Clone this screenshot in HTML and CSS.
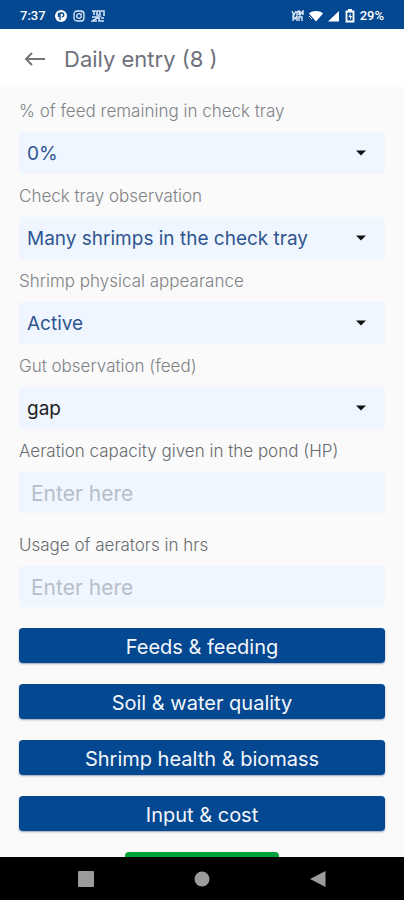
FILE: index.html
```html
<!DOCTYPE html>
<html lang="en">
<head>
<meta charset="utf-8">
<meta name="viewport" content="width=device-width, initial-scale=1">
<title>Daily entry</title>
<link rel="stylesheet" href="styles.css">
</head>
<body>
<div class="status">
  <div class="status-group">
    <span class="time">7:37</span>
    <svg width="12" height="12" viewBox="0 0 12 12" aria-hidden="true"><circle cx="6" cy="6" r="6" fill="#fff"/><path d="M5 10V3h1.800a1.800 1.800 0 0 1 0 3.800M3.500 3v4" fill="none" stroke="#034890" stroke-width="1.400"/></svg>
    <svg width="12" height="12" viewBox="0 0 12 12" fill="none" stroke="#dfe9f5" stroke-width="1.300" aria-hidden="true"><rect x="1" y="1" width="10" height="10" rx="3"/><circle cx="6" cy="6" r="2.300"/><path d="M8.500 3h.8"/></svg>
    <svg width="14" height="12" viewBox="0 0 14 12" fill="none" stroke="#d3e2f3" stroke-width="1.600" aria-hidden="true"><path d="M1 1h4M3 1v4M6 1v4h3V1zM10 1h3v5M1 7h7l-7 4h5M8 7v4h5M10 8h3"/></svg>
  </div>
  <div class="status-group status-right">
    <svg width="13" height="12" viewBox="0 0 13 12" fill="none" stroke="#dce8f5" stroke-width="1.400" aria-hidden="true"><path d="M1 1l2 4 2-4M6 5V2l2-1v4M9 1v4l3-4v4M2 11V6l2 3 2-3v5M8 6v5M8 7h3v4"/></svg>
    <svg width="14" height="12" viewBox="0 0 14 12" aria-hidden="true"><path d="M0 3.500C4 .3 10 .3 14 3.500L7 11.500z" fill="#fff"/><path d="M0 6l3 3" stroke="#fff"/></svg>
    <svg width="12" height="12" viewBox="0 0 12 12" aria-hidden="true"><path d="M0 11.500L11 1v10.500z" fill="#fff"/></svg>
    <svg width="10" height="14" viewBox="0 0 10 14" aria-hidden="true"><path d="M3 1h4M1.500 2.500h7v10h-7z" fill="none" stroke="#fff" stroke-width="1.800"/><path d="M5.500 4L3.500 8H5v3l2-4H5.500z" fill="#fff"/></svg>
    <span class="battery">29%</span>
  </div>
</div>
<header class="header">
  <button class="back" type="button" aria-label="Back">
    <svg width="22" height="16" viewBox="0 0 22 16" fill="none" stroke="#747474" stroke-width="2" aria-hidden="true"><path d="M21 8H2M8 2L2 8l6 6"/></svg>
  </button>
  <h1 class="title">Daily entry (8 )</h1>
</header>
<main class="content">
  <form class="form">
    <div class="field">
      <label class="label" for="remaining">% of feed remaining in check tray</label>
      <div class="picker">
        <select class="control" id="remaining"><option>0%</option></select>
        <svg class="arrow" width="10" height="6" viewBox="0 0 10 6" aria-hidden="true"><path d="M0 .5h10L5 5.500z"/></svg>
      </div>
    </div>
    <div class="field">
      <label class="label" for="tray">Check tray observation</label>
      <div class="picker">
        <select class="control" id="tray"><option>Many shrimps in the check tray</option></select>
        <svg class="arrow" width="10" height="6" viewBox="0 0 10 6" aria-hidden="true"><path d="M0 .5h10L5 5.500z"/></svg>
      </div>
    </div>
    <div class="field">
      <label class="label" for="appearance">Shrimp physical appearance</label>
      <div class="picker">
        <select class="control" id="appearance"><option>Active</option></select>
        <svg class="arrow" width="10" height="6" viewBox="0 0 10 6" aria-hidden="true"><path d="M0 .5h10L5 5.500z"/></svg>
      </div>
    </div>
    <div class="field">
      <label class="label" for="gut">Gut observation (feed)</label>
      <div class="picker">
        <select class="control control-dark" id="gut"><option>gap</option></select>
        <svg class="arrow" width="10" height="6" viewBox="0 0 10 6" aria-hidden="true"><path d="M0 .5h10L5 5.500z"/></svg>
      </div>
    </div>
    <div class="field field-entry">
      <label class="label label-dark" for="capacity">Aeration capacity given in the pond (HP)</label>
      <input class="control control-entry" id="capacity" type="text" placeholder="Enter here">
    </div>
    <div class="field field-entry">
      <label class="label label-dark" for="usage">Usage of aerators in hrs</label>
      <input class="control control-entry" id="usage" type="text" placeholder="Enter here">
    </div>
    <div class="actions">
      <button class="action" type="button">Feeds &amp; feeding</button>
      <button class="action" type="button">Soil &amp; water quality</button>
      <button class="action" type="button">Shrimp health &amp; biomass</button>
      <button class="action" type="button">Input &amp; cost</button>
      <button class="save" type="submit" aria-label="Save"></button>
    </div>
  </form>
</main>
<nav class="system-nav" aria-label="System">
  <button class="nav-button" type="button" aria-label="Recent apps"><svg width="16" height="16" viewBox="0 0 16 16" aria-hidden="true"><rect width="16" height="16" rx="1"/></svg></button>
  <button class="nav-button" type="button" aria-label="Home"><svg width="16" height="16" viewBox="0 0 16 16" aria-hidden="true"><circle cx="8" cy="8" r="7.500"/></svg></button>
  <button class="nav-button" type="button" aria-label="Back"><svg width="16" height="16" viewBox="0 0 16 16" aria-hidden="true"><path d="M0 8L15.500 0v16z"/></svg></button>
</nav>
</body>
</html>
```
FILE: styles.css
```css
* {
  box-sizing: border-box;
}

body {
  margin: 0;
  height: 100vh;
  display: flex;
  flex-direction: column;
  background: #fafafa;
  font-family: Inter, sans-serif;
}

button {
  border: 0;
  padding: 0;
  font-family: inherit;
}

svg {
  display: block;
}

.status {
  flex: none;
  display: flex;
  justify-content: space-between;
  padding: 0 20px;
  min-height: 29px;
  background: #034890;
  color: #fff;
  font-family: Roboto, sans-serif;
  font-size: 13px;
  font-weight: 500;
  line-height: 16px;
}

.status-group {
  display: flex;
  align-items: center;
  gap: 6px;
  padding-top: 2px;
}

.time {
  margin-right: 3px;
}

.status-right {
  gap: 5px;
}

.header {
  flex: none;
  display: flex;
  align-items: center;
  gap: 18px;
  padding: 2px 24px 0;
  min-height: 58px;
  background: #fff;
}

.back {
  background: none;
}

.title {
  margin: 0;
  color: #6e717c;
  font-size: 22px;
  font-weight: 400;
  line-height: 28px;
}

.content {
  flex: 1;
  min-height: 0;
  overflow-y: auto;
  scrollbar-width: none;
}

.form {
  padding: 13px 19px 24px;
}

.field {
  display: flex;
  flex-direction: column;
  gap: 10px;
  margin-bottom: 11px;
}

.field-entry {
  margin-bottom: 21px;
}

.label {
  color: #808285;
  font-size: 17px;
  font-weight: 300;
  line-height: 22px;
}

.label-dark {
  color: #686b70;
}

.picker {
  display: grid;
  align-items: center;
}

.picker > * {
  grid-area: 1 / 1;
}

.control {
  appearance: none;
  width: 100%;
  height: 42px;
  margin: 0;
  border: 0;
  border-radius: 3px;
  padding: 0 32px 0 8px;
  background: #eff6ff;
  color: #2f5590;
  font-family: inherit;
  font-size: 19px;
  font-weight: 400;
}

.control-dark {
  color: #222;
}

.control-entry {
  height: 41px;
  padding: 2px 12px 0;
  font-size: 21px;
}

.control-entry::placeholder {
  color: #b7bec8;
  opacity: 1;
}

.arrow {
  justify-self: end;
  margin-right: 19px;
  fill: #111;
  pointer-events: none;
}

.actions {
  display: flex;
  flex-direction: column;
  gap: 21px;
}

.action {
  min-height: 35px;
  border-radius: 4px;
  padding-top: 2px;
  background: #034890;
  box-shadow: 0 1px 2px #00206066;
  color: #f4f7fb;
  font-size: 20px;
  line-height: 24px;
}

.save {
  align-self: center;
  width: 42%;
  min-height: 35px;
  border-radius: 4px;
  background: #00a33b;
}

.system-nav {
  flex: none;
  display: flex;
  justify-content: space-around;
  align-items: center;
  padding: 0 28px;
  min-height: 43px;
  background: #000;
}

.nav-button {
  background: none;
  fill: #9c9c9c;
}
```
